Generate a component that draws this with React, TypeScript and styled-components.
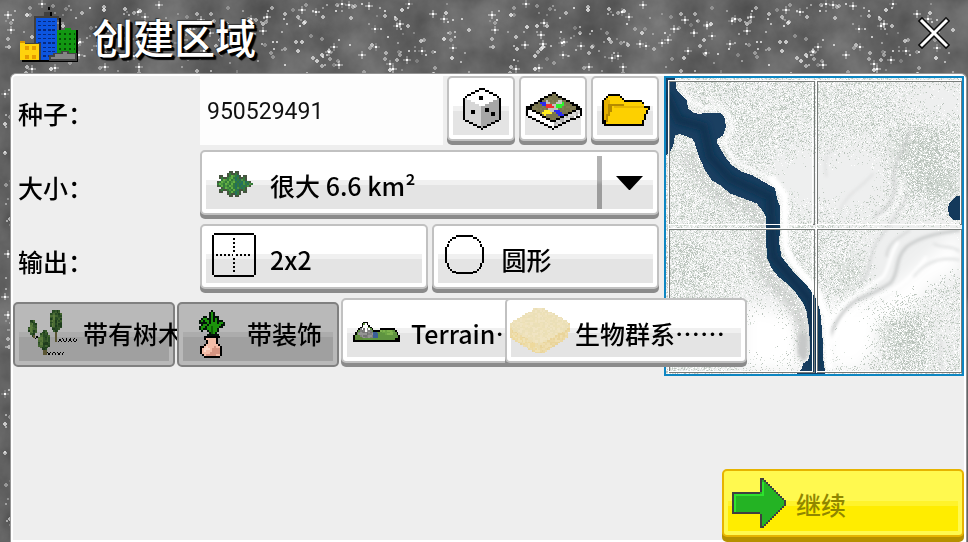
import React from "react";
import styled, { createGlobalStyle, css } from "styled-components";

/* ---------- pixel art helpers ---------- */

type Layer = {
  points: string;
  fill: string | string[];
  outline?: string;
};

const hash = (x: number, y: number) => {
  let h = (x * 374761393 + y * 668265263) | 0;
  h = Math.imul(h ^ (h >>> 13), 1274126177);
  return ((h ^ (h >>> 16)) >>> 0) / 4294967296;
};

const makeRandom = (seed: number) => {
  let s = seed;
  return () => {
    s = (Math.imul(s, 1664525) + 1013904223) >>> 0;
    return s / 4294967296;
  };
};

const parse = (points: string) =>
  points.split(" ").map((pair) => pair.split(",").map(Number));

const inside = (poly: number[][], x: number, y: number) => {
  let hit = false;
  for (let i = 0, j = poly.length - 1; i < poly.length; j = i++) {
    const [xi, yi] = poly[i];
    const [xj, yj] = poly[j];
    if (yi > y !== yj > y && x < ((xj - xi) * (y - yi)) / (yj - yi) + xi) hit = !hit;
  }
  return hit;
};

/* Fills polygons cell by cell, so that every edge is a staircase. */
function Raster({ layers, cell = 6 }: { layers: Layer[]; cell?: number }) {
  const cells: Record<string, string> = {};
  layers.forEach(({ points, fill, outline }) => {
    const poly = parse(points);
    const xs = poly.map((p) => p[0]);
    const ys = poly.map((p) => p[1]);
    const at = (cx: number, cy: number) => inside(poly, (cx + 0.5) * cell, (cy + 0.5) * cell);
    for (let cy = Math.floor(Math.min(...ys) / cell); cy <= Math.max(...ys) / cell; cy++) {
      for (let cx = Math.floor(Math.min(...xs) / cell); cx <= Math.max(...xs) / cell; cx++) {
        if (!at(cx, cy)) continue;
        const edge = !at(cx - 1, cy) || !at(cx + 1, cy) || !at(cx, cy - 1) || !at(cx, cy + 1);
        const base = Array.isArray(fill) ? fill[Math.floor(hash(cx, cy) * fill.length)] : fill;
        cells[`${cx},${cy}`] = outline && edge ? outline : base;
      }
    }
  });
  const paths: Record<string, string> = {};
  Object.entries(cells).forEach(([key, color]) => {
    const [cx, cy] = key.split(",").map(Number);
    paths[color] = (paths[color] || "") + `M${cx * cell} ${cy * cell}h${cell}v${cell}h${-cell}z`;
  });
  return (
    <g shapeRendering="crispEdges">
      {Object.entries(paths).map(([color, d]) => (
        <path key={color} d={d} fill={color} />
      ))}
    </g>
  );
}

/* Draws a sprite from rows of palette letters; a dot is a clear cell. */
function Sprite({
  rows,
  palette,
  x,
  y,
  cell = 6,
}: {
  rows: string[];
  palette: Record<string, string>;
  x: number;
  y: number;
  cell?: number;
}) {
  return (
    <g shapeRendering="crispEdges">
      {rows.flatMap((row, r) =>
        row.split("").map((c, i) =>
          palette[c] ? (
            <rect key={`${r}-${i}`} x={x + i * cell} y={y + r * cell} width={cell} height={cell} fill={palette[c]} />
          ) : null,
        ),
      )}
    </g>
  );
}

const IconSvg = styled.svg`
  display: block;
  flex: none;
  width: 57px;
  height: 53px;
  overflow: visible;
`;

function Icon({ x, y, children }: { x: number; y: number; children: React.ReactNode }) {
  return (
    <IconSvg viewBox={`${x} ${y} 171 159`} aria-hidden="true">
      {children}
    </IconSvg>
  );
}

/* ---------- icons ---------- */

const DICE = [
  "........KKK........",
  "......KKWWWKK......",
  "....KKWWWWWWWKK....",
  "..KKWWWWWWWWWWWKK..",
  ".KWWWWWWKKWWWWWWWK.",
  "KLWWWWWWKKWWWWWWWGK",
  "KLLLWWWWWWWWWWWGGGK",
  "KLLLLLWWWWWWWGGGGGK",
  "KLLLLLLLWWWGGGGGGGK",
  "KLLLLLLLLGGGGGGGGGK",
  "KLLLLLLLLGGKKGGGGGK",
  "KLLLKKLLLGGKKGGGGGK",
  "KLLLKKLLLGGGGGKKGGK",
  "KLLLLLLLLGGGGGKKGGK",
  "KLLLLLLLLGGGGGGGGGK",
  "KLLLLLLLLGGGGGGGGGK",
  ".KKLLLLLLGGGGGGGKK.",
  "...KKLLLLGGGGGKK...",
  ".....KKLLGGGKK.....",
  ".......KKGKK.......",
  ".........K.........",
];

const DiceIcon = () => (
  <Icon x={39} y={36}>
    <Sprite rows={DICE} palette={{ K: "#000", W: "#fff", L: "#d6d6d6", G: "#a6a6a6" }} x={69} y={54} />
  </Icon>
);

const TileIcon = () => (
  <Icon x={255} y={36}>
    <Raster
      layers={[
        { points: "258,112 340,66 424,112 424,138 340,178 258,138", fill: "#fff", outline: "#000" },
        { points: "342,150 418,116 418,134 342,170", fill: ["#b5b5b5", "#d8d8d8"] },
        { points: "258,114 340,66 424,114 340,158", fill: ["#77734c", "#817c54", "#77734c"], outline: "#000" },
        { points: "306,128 360,90 378,96 330,134", fill: "#c4c4c4" },
        { points: "312,96 324,92 360,122 342,124", fill: "#c0c0c0" },
        { points: "298,94 318,94 322,106 306,106", fill: "#2a2af0" },
        { points: "342,122 360,120 372,136 354,136", fill: "#2a2af0" },
        { points: "346,104 372,98 376,108 352,116", fill: "#2df02d" },
        { points: "318,106 336,100 342,110 324,118", fill: "#f03030" },
        { points: "306,124 330,120 336,132 312,136", fill: "#ffee20" },
      ]}
    />
  </Icon>
);

const FolderIcon = () => (
  <Icon x={471} y={36}>
    <Raster
      layers={[
        { points: "486,90 504,74 540,74 552,88 606,88 612,106 612,168 492,168 486,158", fill: "#fdd000", outline: "#000" },
        { points: "506,108 632,108 606,168 490,168", fill: "#fdd000", outline: "#000" },
        { points: "498,102 612,102 612,114 498,114", fill: "#fdd000" },
        { points: "492,96 504,84 510,96 504,126 492,160", fill: "#e3af00" },
        { points: "504,102 552,102 552,108 516,108 516,120 510,132 504,150 498,160 498,140 504,120", fill: "#b58a00" },
        { points: "522,108 612,108 612,114 522,114", fill: "#e8b800" },
      ]}
    />
  </Icon>
);

const CLUSTER = [
  "......dd.dd.......",
  ".....dgddgd.......",
  ".dd..dgabgcd.dd...",
  ".dgddgbagcgddgd...",
  "..gabgagbcgcbgd...",
  "dgabgagbagcgcbcgd.",
  "gabgabgagcgccbgcbg",
  "dgagbgabgcgcgcgbd.",
  "..dgabgagcbgcgd...",
  ".dgddgbgagcddgd...",
  ".dd..dgagcgd.dd...",
  ".....dgddcgd......",
  "......dd.dd.......",
];

const ClusterIcon = () => (
  <Icon x={48} y={33}>
    <Sprite
      rows={CLUSTER}
      palette={{ d: "#46543f", g: "#337a3a", a: "#63b043", b: "#4b9440", c: "#24705c" }}
      x={81}
      y={78}
    />
  </Icon>
);

const GridIcon = () => (
  <Icon x={48} y={255}>
    <g fill="none" stroke="#000" strokeWidth={6} shapeRendering="crispEdges">
      <path d="M72 267H192M72 393H192M69 270V390M195 270V390" />
      <path d="M78 330H186" strokeWidth={4} strokeDasharray="6 6" />
      <path d="M132 279V384" strokeWidth={6} strokeDasharray="6 6" />
    </g>
    <rect x={129} y={326} width={6} height={7} fill="#fff" />
  </Icon>
);

const CircleIcon = () => (
  <Icon x={24} y={255}>
    <path
      d="M78 273H129M78 384H129M48 306V354M159 306V354M66 279H78M129 279H141M60 285H66M141 285H147M54 291H60M147 291H153M54 297V306M153 297V306M66 381H78M129 381H141M60 375H66M141 375H147M54 369H60M147 369H153M54 354V366M153 354V366"
      fill="none"
      stroke="#000"
      strokeWidth={6}
      shapeRendering="crispEdges"
    />
  </Icon>
);

const shade = ["#1e3c1c", "#35562a", "#284a24", "#41632f"];
const TreesIcon = () => (
  <Icon x={57} y={54}>
    <g fill="none" stroke="#000" strokeWidth={4} shapeRendering="crispEdges">
      <path d="M99 141H118M168 150H232M135 192H188" strokeDasharray="4 6" />
      <path d="M104 145H118M173 154H232M140 188H192" strokeDasharray="4 6" />
      <path d="M186 146H232" strokeDasharray="4 8" />
    </g>
    <Raster
      cell={5}
      layers={[
        { points: "164,120 172,120 172,155 164,155", fill: "#5b5634" },
        { points: "130,178 138,178 138,195 130,195", fill: "#5b5634" },
        { points: "98,135 106,135 106,146 98,146", fill: "#5b5634" },
        { points: "160,58 176,58 186,78 186,110 176,124 160,124 150,106 150,76", fill: shade },
        { points: "152,78 164,64 164,118 154,106", fill: ["#4a6c35", "#5b7b3c", "#35562a"] },
        { points: "128,122 140,122 152,144 148,170 138,182 126,182 115,166 115,142", fill: shade },
        { points: "117,142 130,130 130,174 118,164", fill: ["#4a6c35", "#5b7b3c"] },
        { points: "92,92 104,92 110,108 108,132 100,140 90,136 86,118", fill: shade },
        { points: "88,100 98,98 98,130 90,128", fill: ["#4a6c35", "#5b7b3c"] },
      ]}
    />
  </Icon>
);

const PLANT = [
  "......K.......",
  ".....KGK......",
  ".....KGK......",
  "..KK.KGKKK....",
  ".KGGKKGKGK....",
  "KGKGGKGKGKKK..",
  "KKKKGKGGGKGGK.",
  ".KGGKGGGGGGKK.",
  "KGGKGGDGGGKK..",
  "KGKKGGDGGK....",
  ".K..KGDGGK....",
  ".....KDGK.....",
  "....KKKKKK....",
];

const PotIcon = () => (
  <Icon x={549} y={54}>
    <Sprite rows={PLANT} palette={{ K: "#04140a", G: "#1c930b", D: "#0f5f06" }} x={597} y={60} />
    <Raster
      layers={[
        {
          points: "612,136 660,136 660,144 654,150 654,160 668,170 668,190 658,202 612,202 600,190 600,172 618,160 618,150 612,144",
          fill: "#f4bda8",
          outline: "#000",
        },
        { points: "642,168 660,174 660,190 648,196 618,196 636,186", fill: "#d69582" },
        { points: "612,174 624,168 630,180 612,184", fill: "#fbd9ca" },
      ]}
    />
  </Icon>
);

const TerrainIcon = () => (
  <Icon x={36} y={42}>
    <Raster
      cell={5}
      layers={[
        {
          points: "54,142 62,126 80,106 88,94 98,94 104,106 122,122 138,116 156,113 178,116 188,126 196,142 196,152 60,156",
          fill: "#5f9440",
          outline: "#000",
        },
        { points: "66,142 70,126 82,110 92,98 100,110 116,126 124,146 64,148", fill: ["#808080", "#949494", "#737373"] },
        { points: "82,118 84,108 92,98 100,108 104,122 98,116 92,124 88,114", fill: "#fff" },
        { points: "60,142 74,132 84,148 62,150", fill: "#5f8a3a" },
        { points: "116,126 126,122 130,142 118,148", fill: "#3a5f97" },
        { points: "136,122 166,118 182,126 176,134 142,132", fill: ["#7fb44f", "#6aa344"] },
        { points: "56,150 196,150 196,155 56,155", fill: "#000" },
      ]}
    />
  </Icon>
);

const BiomeIcon = () => (
  <Icon x={528} y={42}>
    <Raster
      cell={5}
      layers={[
        { points: "524,104 536,92 600,56 628,56 692,90 706,106 700,142 628,188 600,188 526,144", fill: ["#ecd9a4", "#e9d49a", "#efdeb0"] },
        { points: "524,104 536,92 600,56 628,56 692,90 704,106 690,122 614,164 536,124", fill: ["#efe2bb", "#f0e4c2", "#ece0b6", "#eadfb8"] },
        { points: "528,126 614,168 614,186 602,186 528,144", fill: ["#f0e2b4", "#eed99c", "#ecdcab"] },
      ]}
    />
  </Icon>
);

const ArrowIcon = () => (
  <Icon x={54} y={45}>
    <Raster
      layers={[
        { points: "64,96 148,96 148,54 159,54 231,129 159,206 148,206 148,162 64,162", fill: "#24b324", outline: "#404040" },
        { points: "72,102 156,102 156,66 162,66 162,108 78,108 78,156 72,156", fill: "#2de32d" },
      ]}
    />
  </Icon>
);

const CitySvg = styled.svg`
  display: block;
  flex: none;
  width: 62px;
  height: 60px;
`;

const CityIcon = () => {
  const range = (n: number) => Array.from({ length: n }, (_, i) => i);
  return (
    <CitySvg viewBox="54 12 186 180" aria-hidden="true">
      <g shapeRendering="crispEdges">
        <path d="M144 20h6v9h-6zM150 36h6v18h-6zM176 54h8v36h-8zM66 180h168v6H66zM228 90h7v96h-7z" fill="#000" />
        <path d="M132 36h18v12h-18zM102 48h76v12h-76zM102 54h6v78h-6z" fill="#404040" />
        <rect x={108} y={54} width={64} height={126} fill="#0c55e0" />
        {range(9).map((i) => (
          <path key={i} d={`M115 ${64 + i * 13}h22M143 ${64 + i * 13}h22`} stroke="#062a80" strokeWidth={4} strokeDasharray="9 4" />
        ))}
        <path d="M172 90h24v-7h16v7h16v70h-56z" fill="#129812" />
        {range(4).map((i) => (
          <path key={i} d={`M178 ${101 + i * 15}h48`} stroke="#064f06" strokeWidth={6} strokeDasharray="6 9" />
        ))}
        <path d="M60 124h14v6h48v50h-6v-48H60z" fill="#404040" />
        <path d="M60 124h14v8h43v48H60z" fill="#ffd20d" />
        {range(2).map((i) => (
          <path key={i} d={`M74 ${145 + i * 26}h38`} stroke="#e59b00" strokeWidth={12} strokeDasharray="12 10" />
        ))}
        <path d="M60 124h14v6H60z" fill="#d99500" />
        <path d="M150 180v-12h12v-8h24v-6h18v6h24v20z" fill="#858585" stroke="#444" strokeWidth={4} />
      </g>
    </CitySvg>
  );
};

/* ---------- starry backdrop ---------- */

const starTile = (() => {
  const rnd = makeRandom(77);
  let out = "";
  for (let i = 0; i < 1250; i++) {
    const x = Math.floor(rnd() * 476) + 3;
    const y = Math.floor(rnd() * 294) + 3;
    const s = rnd();
    const o = (0.2 + rnd() * 0.5).toFixed(2);
    if (s < 0.2) {
      out += `<path d="M${x - 3} ${y + 1}h8M${x + 1} ${y - 3}v8" stroke="#fff" stroke-width="2" opacity="${(+o * 0.6).toFixed(2)}"/><rect x="${x}" y="${y}" width="2" height="2" fill="#fff"/>`;
    } else if (s < 0.6) {
      out += `<path d="M${x - 1} ${y + 1}h4M${x + 1} ${y - 1}v4" stroke="#fff" stroke-width="2" opacity="${o}"/>`;
    } else {
      out += `<rect x="${x}" y="${y}" width="2" height="2" fill="#fff" opacity="${o}"/>`;
    }
  }
  const svg =
    `<svg xmlns="http://www.w3.org/2000/svg" width="484" height="300">` +
    `<filter id="n" x="0" y="0" width="100%" height="100%" color-interpolation-filters="sRGB"><feTurbulence type="fractalNoise" baseFrequency="0.02" numOctaves="5" seed="4" stitchTiles="stitch"/>` +
    `<feColorMatrix values="0.25 0 0 0 0.27 0.25 0 0 0 0.27 0.25 0 0 0 0.27 0 0 0 0 1"/></filter>` +
    `<rect width="484" height="300" filter="url(#n)"/>${out}</svg>`;
  return `url("data:image/svg+xml,${encodeURIComponent(svg)}")`;
})();

/* ---------- region preview ---------- */

const mapDots = (() => {
  const bump = (x: number, y: number, cx: number, cy: number, rx: number, ry: number) =>
    Math.exp(-(((x - cx) / rx) ** 2) - ((y - cy) / ry) ** 2);
  const tones = ["#ffffff", "#dde3de", "#cdd5ce", "#b9c2bb"];
  const paths = tones.map(() => "");
  for (let cy = 8; cy < 304; cy++) {
    for (let cx = 6; cx < 302; cx++) {
      const x = cx * 3;
      const y = cy * 3;
      let density = 0.55;
      density -= 0.6 * bump(x, y, 400, 320, 90, 90);
      density -= 0.7 * bump(x, y, 580, 330, 120, 110);
      density -= 0.6 * bump(x, y, 830, 90, 120, 70);
      density -= 0.7 * bump(x, y, 860, 540, 170, 90);
      density -= 0.7 * bump(x, y, 720, 590, 110, 120);
      density -= 0.75 * bump(x, y, 580, 800, 100, 120);
      density -= 0.7 * bump(x, y, 310, 800, 120, 140);
      density -= 0.35 * bump(x, y, 850, 800, 60, 90);
      density += 0.4 * bump(x, y, 790, 260, 75, 120);
      density += 0.45 * bump(x, y, 730, 800, 90, 90);
      density += 0.2 * bump(x, y, 570, 620, 50, 70);
      density += 0.2 * bump(x, y, 70, 580, 80, 60);
      const patch = hash(Math.floor(cx / 5) + 900, Math.floor(cy / 5)) * 0.2;
      if (hash(cx, cy) < density + patch - 0.08) {
        const tone = Math.min(3, Math.floor(hash(cx + 5000, cy) * (density > 0.6 ? 4.4 : 3.6)));
        paths[tone] += `M${x} ${y}h3v3h-3z`;
      }
    }
  }
  return tones.map((fill, i) => ({ fill, d: paths[i] }));
})();

const RIVER =
  "M18 24H45L50 60L65 75L80 90L84 115L100 128L120 133L135 128H180L193 142L198 170L190 195L172 207V220L195 260L215 285L245 305L275 315L310 335L345 355L352 390L360 410V440L358 520L364 560L400 605L440 645L465 680L480 720L487 790L490 870L496 912H408L425 898L430 880L445 870L450 850L448 780L440 725L430 700L405 665L380 640L355 620L335 595L320 560L318 440L310 425L290 400L250 385L210 370L180 345L155 330L135 300L115 255L103 215L95 205L60 192L45 195L40 225L30 246L18 255Z";

const MapFrame = styled.div`
  flex: none;
  box-sizing: border-box;
  width: 300px;
  height: 300px;
  border: 2px solid #0d86c2;
`;

const MapSvg = styled.svg`
  display: block;
  width: 100%;
  height: 100%;
`;

const RegionMap = () => (
  <MapFrame>
    <MapSvg viewBox="18 24 888 888" role="img" aria-label="区域预览">
      <defs>
        <filter id="soft" x="-10%" y="-10%" width="120%" height="120%">
          <feGaussianBlur stdDeviation="4" />
        </filter>
        <filter id="deep" x="-10%" y="-10%" width="120%" height="120%">
          <feGaussianBlur stdDeviation="9" />
        </filter>
        <filter id="wide" x="-20%" y="-20%" width="140%" height="140%">
          <feGaussianBlur stdDeviation="22" />
        </filter>
        <clipPath id="water">
          <path d={RIVER} />
        </clipPath>
      </defs>
      <rect x="18" y="24" width="888" height="888" fill="#eeefef" />
      <g filter="url(#wide)">
        <path d="M500 700L640 700L700 650L900 480V600L820 640L600 900H500Z" fill="#fff" />
        <path d="M250 700L420 740V900H250Z" fill="#fff" />
        <path d="M790 300L880 320L870 370L800 360Z" fill="#b9c4bb" />
        <path d="M700 200L830 200L820 250L710 330Z" fill="#d5dad6" />
        <path d="M560 560L610 600L570 660L530 640Z" fill="#d5dad6" />
        <path d="M660 760L780 760L760 840L660 830Z" fill="#d8ddd9" />
      </g>
      <path
        d="M80 240L115 310L155 355L210 392L270 410L298 440L296 570L330 630L400 700L425 760L432 860"
        fill="none"
        stroke="#c4c6c5"
        strokeWidth={38}
        opacity={0.7}
        filter="url(#deep)"
      />
      {mapDots.map(({ fill, d }) => (
        <path key={fill} d={d} fill={fill} shapeRendering="crispEdges" />
      ))}
      <g fill="none" filter="url(#soft)">
        <path d="M510 800C530 740 560 710 590 690C640 670 660 660 690 640C720 610 700 570 740 530C780 500 830 490 900 480" stroke="#c9cbcb" strokeWidth={9} />
        <path d="M500 770C530 700 600 670 670 620C690 590 690 550 715 515" stroke="#fff" strokeWidth={10} />
        <path d="M520 820C550 750 600 700 680 670C740 640 770 600 800 560" stroke="#fff" strokeWidth={10} />
        <path d="M600 640C640 600 620 560 655 510C680 480 715 430 745 370" stroke="#d2d4d4" strokeWidth={6} />
        <path d="M680 560C680 520 720 500 750 480" stroke="#d0d2d2" strokeWidth={6} />
        <path d="M640 440C700 410 710 370 700 320C710 250 740 230 750 180" stroke="#cdcfcf" strokeWidth={6} />
        <path d="M655 450C715 420 730 370 722 330" stroke="#fff" strokeWidth={6} />
        <path d="M540 420C560 370 610 350 640 310M500 320C490 280 500 250 515 235" stroke="#dcdddd" strokeWidth={5} />
        <path d="M760 620C800 570 850 560 900 570M840 800C850 840 830 860 850 900M820 520C850 540 870 520 900 545" stroke="#d8dada" strokeWidth={5} />
        <path d="M60 40L90 95L130 112H185L214 150L212 190L190 215L225 275L330 325L365 350" stroke="#fff" strokeWidth={12} opacity={0.8} />
        <path d="M330 320L374 375L376 530L400 580L470 660L500 740L508 900" stroke="#fff" strokeWidth={22} />
      </g>
      <path d="M416 792H442V860L430 876L414 850Z" fill="#c6c8c8" filter="url(#soft)" />
      <path d={RIVER} fill="#1a3f61" shapeRendering="crispEdges" />
      <g clipPath="url(#water)">
        <path
          d="M18 70L55 150L130 170L150 260L210 325L330 380L340 560L450 690L470 900"
          fill="none"
          stroke="#10314f"
          strokeWidth={26}
          filter="url(#deep)"
        />
      </g>
      <path d="M906 378H888L870 396L863 415L868 438L882 451H906Z" fill="#14395b" shapeRendering="crispEdges" />
      <g fill="none" strokeWidth={3} shapeRendering="crispEdges">
        <path d="M27 34H462V463H27ZM471 34H903V463H471ZM27 478H462V906H27ZM471 478H903V906H471Z" stroke="#777b79" />
        <path d="M24 30H904M458 36V463M24 463H458M468 30V908M468 463H900M24 475H904M458 480V906M24 903H458M900 36V463M900 480V906M468 903H900M24 30V908" stroke="#fff" />
      </g>
    </MapSvg>
  </MapFrame>
);

/* ---------- page ---------- */

const GlobalStyle = createGlobalStyle`
  body {
    margin: 0;
    background: #646464 ${starTile};
    font-family: "Noto Sans CJK SC", "Noto Sans", sans-serif;
    color: #000;
  }
`;

const Page = styled.main`
  display: flex;
  flex-direction: column;
  box-sizing: border-box;
  min-height: 100vh;
  padding: 0 1px 0 10px;
`;

const Header = styled.header`
  display: flex;
  align-items: center;
  height: 73px;
  padding: 0 13px 6px 8px;
  box-sizing: border-box;
`;

const Title = styled.h1`
  flex: 1;
  margin: 4px 0 0 12px;
  color: #fff;
  font-size: 41px;
  font-weight: 500;
  line-height: 60px;
  text-shadow: 2px 2px 0 #000, 3px 3px 1px #000, -1px -1px 1px #333;
`;

const CloseButton = styled.button`
  display: flex;
  margin: 0 0 2px;
  padding: 0;
  border: 0;
  background: none;
  cursor: pointer;
`;

const Panel = styled.section`
  display: flex;
  flex: 1;
  flex-direction: column;
  border: 1px solid #949494;
  border-bottom: 0;
  border-radius: 6px 6px 0 0;
  background: #eee;
  box-shadow: inset 0 0 0 2px #fff;
  padding: 2px;
  padding-bottom: 0;
`;

const Columns = styled.div`
  display: flex;
  gap: 5px;
`;

const Form = styled.form`
  display: flex;
  flex: 1;
  flex-direction: column;
  gap: 5px;
  min-width: 0;
  z-index: 1;
`;

const Row = styled.div`
  display: flex;
  height: 69px;
`;

const RowLabel = styled.label`
  flex: none;
  box-sizing: border-box;
  width: 187px;
  padding: 7px 0 0 5px;
  font-size: 25px;
  font-weight: 500;
  line-height: 60px;
`;

const Controls = styled.div`
  display: flex;
  flex: 1;
  gap: 4px;
  min-width: 0;
`;

const SeedInput = styled.input`
  flex: 1;
  min-width: 0;
  box-sizing: border-box;
  height: 69px;
  padding: 2px 7px 0;
  border: 0;
  background: #fdfdfd;
  font-family: Roboto, "Noto Sans", sans-serif;
  font-size: 23px;
  color: #111;
`;

const raised = css`
  box-sizing: border-box;
  height: 65px;
  padding: 4px;
  border: 2px solid #c1c1c1;
  border-radius: 5px;
  background:
    linear-gradient(#fff 0 24px, #f0f0f0 24px 29px, #e4e4e4 29px) content-box,
    #fff;
  box-shadow: 0 4px 0 #8b8b8b;
`;

const textStyle = css`
  font-family: inherit;
  font-size: 25px;
  font-weight: 500;
  line-height: 53px;
  color: #000;
`;

const Button = styled.button<{ $width?: number; $pressed?: boolean }>`
  ${raised}
  ${textStyle}
  display: flex;
  flex: ${(p) => (p.$width ? "none" : "1")};
  width: ${(p) => (p.$width ? `${p.$width}px` : "auto")};
  gap: 7px;
  min-width: 0;
  text-align: left;
  white-space: nowrap;
  cursor: pointer;
  ${(p) =>
    p.$pressed &&
    css`
      margin-top: 4px;
      border-color: #808080;
      background:
        linear-gradient(#b9b9b9 0 24px, #acacac 24px 29px, #a0a0a0 29px) content-box,
        #b9b9b9;
      box-shadow: none;
    `}
`;

const Caption = styled.span<{ $raise?: boolean }>`
  display: flex;
  height: 53px;
  box-sizing: border-box;
  padding-top: ${(p) => (p.$raise ? "0" : "3px")};
  line-height: ${(p) => (p.$raise ? "50px" : "53px")};
`;

const SelectFrame = styled.div`
  ${raised}
  display: grid;
  flex: 1;
`;

const SizeSelect = styled.select`
  ${textStyle}
  grid-area: 1 / 1;
  appearance: none;
  height: 53px;
  border: 0;
  padding: 3px 60px 0 64px;
  background: transparent;
  cursor: pointer;
`;

const SelectDecor = styled.div`
  display: flex;
  grid-area: 1 / 1;
  align-items: center;
  justify-content: space-between;
  pointer-events: none;
`;

const Drop = styled.span`
  display: flex;
  align-items: center;
  gap: 14px;
  padding-right: 10px;
`;

const Divider = styled.span`
  width: 5px;
  height: 53px;
  background: linear-gradient(#b2b2b2 0 24px, #9c9c9c 29px);
`;

const Options = styled.div`
  display: grid;
  grid-template-columns: repeat(4, 162px);
  gap: 2px;
`;

const Footer = styled.footer`
  display: flex;
  justify-content: flex-end;
  margin-top: auto;
  padding-bottom: 5px;
`;

const ContinueButton = styled(Button)`
  height: 68px;
  gap: 11px;
  border-color: #e6b400;
  background:
    linear-gradient(#fff94f 0 26px, #fff32a 26px 31px, #ffed00 31px) content-box,
    #fff94f;
  box-shadow: 0 5px 0 #b59000;
  color: #8f8600;
`;

export default function App() {
  return (
    <>
      <GlobalStyle />
      <Page lang="zh-CN">
        <Header>
          <CityIcon />
          <Title>创建区域</Title>
          <CloseButton type="button" aria-label="关闭">
            <svg width="40" height="40" viewBox="0 0 40 40" aria-hidden="true">
              <path d="M8 8L32 32M32 8L8 32" stroke="#000" strokeWidth={6} opacity={0.85} strokeLinecap="square" />
              <path d="M8 8L32 32M32 8L8 32" stroke="#fff" strokeWidth={3} strokeLinecap="square" />
            </svg>
          </CloseButton>
        </Header>
        <Panel>
          <Columns>
            <Form onSubmit={(e) => e.preventDefault()}>
              <Row>
                <RowLabel htmlFor="seed">种子：</RowLabel>
                <Controls>
                  <SeedInput id="seed" type="text" defaultValue="950529491" />
                  <Button type="button" $width={68} aria-label="随机">
                    <DiceIcon />
                  </Button>
                  <Button type="button" $width={68} aria-label="地图">
                    <TileIcon />
                  </Button>
                  <Button type="button" $width={68} aria-label="打开">
                    <FolderIcon />
                  </Button>
                </Controls>
              </Row>
              <Row>
                <RowLabel htmlFor="size">大小：</RowLabel>
                <Controls>
                  <SelectFrame>
                    <SizeSelect id="size">
                      <option>很大 6.6 km²</option>
                    </SizeSelect>
                    <SelectDecor>
                      <ClusterIcon />
                      <Drop>
                        <Divider />
                        <svg width="27" height="14" viewBox="0 0 27 14" aria-hidden="true">
                          <path d="M0 0H27L14 14H13Z" fill="#000" />
                        </svg>
                      </Drop>
                    </SelectDecor>
                  </SelectFrame>
                </Controls>
              </Row>
              <Row role="group" aria-labelledby="output-label">
                <RowLabel as="span" id="output-label">
                  输出：
                </RowLabel>
                <Controls>
                  <Button type="button">
                    <GridIcon />
                    <Caption>2x2</Caption>
                  </Button>
                  <Button type="button">
                    <CircleIcon />
                    <Caption>圆形</Caption>
                  </Button>
                </Controls>
              </Row>
              <Options>
                <Button type="button" $width={162} $pressed aria-pressed="true">
                  <TreesIcon />
                  <Caption $raise>带有树木</Caption>
                </Button>
                <Button type="button" $width={162} $pressed aria-pressed="true">
                  <PotIcon />
                  <Caption $raise>带装饰</Caption>
                </Button>
                <Button type="button" $width={242}>
                  <TerrainIcon />
                  <Caption>
                    <span>Terrain</span>
                    <span>……</span>
                  </Caption>
                </Button>
                <Button type="button" $width={242}>
                  <BiomeIcon />
                  <Caption>生物群系……</Caption>
                </Button>
              </Options>
            </Form>
            <RegionMap />
          </Columns>
          <Footer>
            <ContinueButton type="button" $width={242} disabled>
              <ArrowIcon />
              <Caption>继续</Caption>
            </ContinueButton>
          </Footer>
        </Panel>
      </Page>
    </>
  );
}
